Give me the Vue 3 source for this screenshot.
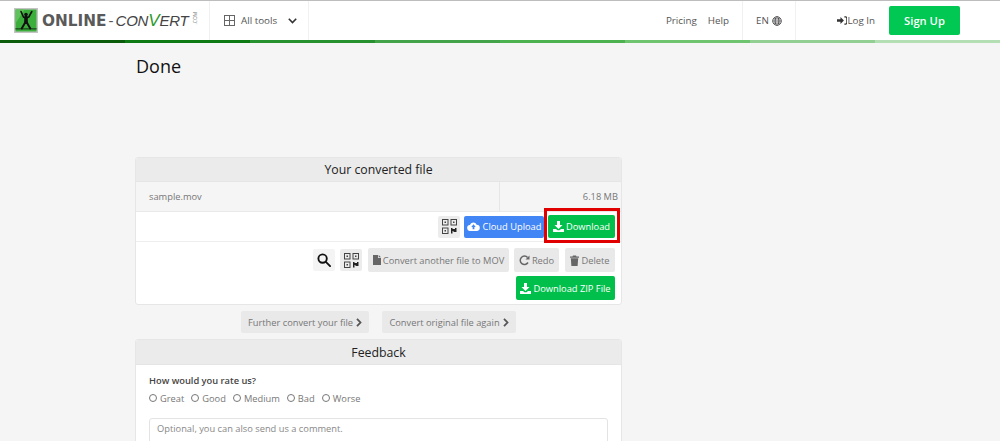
<script setup>
const segments = ['#0a5c0a','#0e7a14','#27902f','#43a349','#4cb14f','#6fc470','#92cf93','#b4deb4']
const rates = ['Great','Good','Medium','Bad','Worse']
</script>

<template>
  <div class="page">
    <header class="top">
      <div class="brand">
        <svg class="mark" width="24" height="25" viewBox="0 0 24 25">
          <rect width="24" height="25" fill="#c4c4c4"/>
          <rect x="1.500" y="1.500" width="21" height="22" fill="#3cae3c"/>
          <path d="M1.500 1.500h9l-9 14z" fill="#5fc25a"/>
          <rect x="1.500" y="20" width="21" height="1.600" fill="#1f5f1f"/>
          <g fill="none" stroke="#111" stroke-linecap="round">
            <path d="M7 3.500l2.500 5.500 2.500.8 2.800-.8 3-5.500" stroke-width="1.600"/>
            <path d="M12 9.500v4.500" stroke-width="3.600"/>
            <path d="M11.500 14l-3.800 6.500M12.500 14l3.800 6.500" stroke-width="2"/>
          </g>
          <circle cx="12" cy="6.500" r="1.800" fill="#111"/>
        </svg>
        <span class="online">ONLINE</span><span class="dash">-</span><span class="convert">CON<em>V</em>ERT</span><span class="com">.COM</span>
      </div>
      <button class="tools">
        <svg width="11" height="11" viewBox="0 0 11 11" fill="none" stroke="#666"><rect x=".5" y=".5" width="10" height="10"/><path d="M5.500 .5v10M.5 5.500h10"/></svg>
        <span>All tools</span>
        <svg width="9" height="6" viewBox="0 0 9 6" fill="none" stroke="#333" stroke-width="1.600"><path d="M.8 .8l3.700 3.700L8.200 .8"/></svg>
      </button>
      <nav class="links"><span>Pricing</span><span>Help</span></nav>
      <div class="lang">
        <span>EN</span>
        <svg width="10" height="10" viewBox="0 0 12 12" fill="none" stroke="#444"><circle cx="6" cy="6" r="5.200"/><ellipse cx="6" cy="6" rx="2.300" ry="5.200"/><path d="M1 6h10M1.700 3.500h8.600M1.700 8.500h8.600"/></svg>
      </div>
      <div class="login">
        <svg width="11" height="9" viewBox="0 0 12 10" fill="#333"><path d="M0 3.500h4V1L8 5 4 9V6.500H0z"/><path d="M8.500 .8h1.500A1.500 1.500 0 0 1 11.300 2.300v5.400A1.500 1.500 0 0 1 10 9.200H8.500" fill="none" stroke="#333" stroke-width="1.200"/></svg>
        <span>Log In</span>
      </div>
      <button class="signup">Sign Up</button>
    </header>
    <div class="progress"><i v-for="(c, i) in segments" :key="i" :style="{ background: c }"></i></div>

    <main class="main">
      <h1>Done</h1>

      <section class="card result">
        <h2>Your converted file</h2>
        <div class="file"><span class="name">sample.mov</span><span class="size">6.18 MB</span></div>
        <div class="row actions">
          <button class="btn icon">
            <svg width="15" height="15" viewBox="0 0 15 15"><g fill="none" stroke="#444"><rect x=".5" y=".5" width="5.500" height="5.500"/><rect x="9" y=".5" width="5.500" height="5.500"/><rect x=".5" y="9" width="5.500" height="5.500"/></g><path d="M2.500 2.500h1.500v1.500H2.500zM11 2.500h1.500v1.500H11zM2.500 11h1.500v1.500H2.500z" fill="#444"/><path d="M9 9h1.500v1h2.500V9h1.500v4h-3v-1h-1v2.500H9z" fill="#222"/></svg>
          </button>
          <button class="btn blue">
            <svg width="13" height="9" viewBox="0 0 14 10"><path d="M3.500 10A3.300 3.300 0 0 1 3 3.400 4 4 0 0 1 10.500 3 3.500 3.500 0 0 1 10.500 10z" fill="#fff"/><path d="M7 2.500L4.500 5.500H6V8h2V5.500h1.500z" fill="#4285f4"/></svg>
            Cloud Upload
          </button>
          <div class="mark-box">
            <button class="btn green">
              <svg width="11" height="11" viewBox="0 0 11 11" fill="#fff"><path d="M4 0h3v4h2.500L5.500 8 1.500 4H4z"/><path d="M0 8h3l1.500 1.300h2L8 8h3v3H0z"/></svg>
              Download
            </button>
          </div>
        </div>
        <div class="tools-row">
          <div class="line">
            <button class="btn icon light">
              <svg width="14" height="14" viewBox="0 0 15 15" fill="none" stroke="#111" stroke-width="2"><circle cx="6" cy="6" r="4.500"/><path d="M9.500 9.500l4.500 4.500" stroke-linecap="round"/></svg>
            </button>
            <button class="btn icon qr-btn">
              <svg width="15" height="15" viewBox="0 0 15 15"><g fill="none" stroke="#444"><rect x=".5" y=".5" width="5.500" height="5.500"/><rect x="9" y=".5" width="5.500" height="5.500"/><rect x=".5" y="9" width="5.500" height="5.500"/></g><path d="M2.500 2.500h1.500v1.500H2.500zM11 2.500h1.500v1.500H11zM2.500 11h1.500v1.500H2.500z" fill="#444"/><path d="M9 9h1.500v1h2.500V9h1.500v4h-3v-1h-1v2.500H9z" fill="#222"/></svg>
            </button>
            <button class="btn gray wide">
              <svg width="8" height="10" viewBox="0 0 8 10" fill="#666"><path d="M0 0h5v3h3v7H0zM5.700 0L8 2.300H5.700z"/></svg>
              Convert another file to MOV
            </button>
            <button class="btn gray redo">
              <svg width="11" height="11" viewBox="0 0 11 11" fill="none" stroke="#666" stroke-width="1.500"><path d="M9 7.500A4.200 4.200 0 1 1 8.600 2.500"/><path d="M10.500 .5v4h-4z" fill="#666" stroke="none"/></svg>
              Redo
            </button>
            <button class="btn gray del">
              <svg width="9" height="11" viewBox="0 0 9 11" fill="#666"><path d="M0 1.500h2.500L3 .5h3l.5 1H9v1.200H0zM.8 3.300h7.400L7.600 11H1.400z"/></svg>
              Delete
            </button>
          </div>
          <div class="line">
            <button class="btn green zip">
              <svg width="11" height="11" viewBox="0 0 11 11" fill="#fff"><path d="M4 0h3v4h2.500L5.500 8 1.500 4H4z"/><path d="M0 8h3l1.500 1.300h2L8 8h3v3H0z"/></svg>
              Download ZIP File
            </button>
          </div>
        </div>
      </section>

      <div class="more">
        <button class="btn gray next">Further convert your file <svg width="6" height="9" viewBox="0 0 6 9" fill="none" stroke="#555" stroke-width="1.800"><path d="M1 .8l3.500 3.700L1 8.200"/></svg></button>
        <button class="btn gray next">Convert original file again <svg width="6" height="9" viewBox="0 0 6 9" fill="none" stroke="#555" stroke-width="1.800"><path d="M1 .8l3.500 3.700L1 8.200"/></svg></button>
      </div>

      <section class="card feedback">
        <h2>Feedback</h2>
        <div class="body">
          <p class="ask">How would you rate us?</p>
          <div class="rates">
            <label v-for="r in rates" :key="r"><i class="radio"></i>{{ r }}</label>
          </div>
          <div class="comment">Optional, you can also send us a comment.</div>
        </div>
      </section>
    </main>
  </div>
</template>

<style>
html, body { margin: 0; overflow: hidden; height: 441px; background: #f5f5f5; }
</style>

<style scoped>
* { box-sizing: border-box; }
.page { height: 441px; overflow: hidden; background: #f5f5f5; font-family: "Open Sans", "Liberation Sans", sans-serif; color: #555; font-size: 9.300px; }
button { font: inherit; border: 0; cursor: pointer; }
.top { height: 40px; background: #fff; border-top: 1px solid #bdbdbd; display: flex; align-items: center; }
.brand { width: 209px; height: 100%; padding-left: 14px; display: flex; align-items: center; white-space: nowrap; flex: none; }
.mark { margin-right: 4px; flex: none; }
.online { font-family: "DejaVu Sans", sans-serif; font-weight: 700; font-size: 15.300px; color: #5a5a5a; }
.dash { font-family: "Liberation Sans", sans-serif; font-size: 15px; color: #555; margin: 0 2px; }
.convert { font-family: "Liberation Sans", sans-serif; font-style: italic; font-size: 15px; color: #444; letter-spacing: -.2px; }
.convert em { color: #2b9a2b; font-size: 17px; }
.com { font-size: 5px; transform: rotate(-90deg); width: 7px; display: block; color: #777; text-align: center; margin-left: 2px; }
.tools { width: 100px; height: 100%; background: #fff; border-left: 1px solid #f1f1f1; border-right: 1px solid #f1f1f1; display: flex; align-items: center; padding: 0 0 0 14px; color: #555; font-size: 9.800px; flex: none; }
.tools span { margin: 0 11px 0 6px; }
.links { margin-left: auto; display: flex; gap: 11px; height: 100%; align-items: center; padding-right: 13px; font-size: 9.800px; }
.lang { width: 54px; height: 100%; border-left: 1px solid #f1f1f1; border-right: 1px solid #f1f1f1; display: flex; align-items: center; justify-content: center; gap: 3px; font-size: 9.800px; }
.login { display: flex; align-items: center; justify-content: space-between; width: 38px; margin-left: 41px; font-size: 9.800px; white-space: nowrap; }
.signup { width: 71px; height: 29px; margin: 0 40px 0 14px; background: #00c853; color: #fff; border-radius: 2px; font-size: 11.200px; font-weight: 600; padding: 0; }
.progress { height: 3px; display: flex; }
.progress i { flex: 1; }
.main { width: 487px; margin-left: 135px; }
h1 { margin: 0; height: 114px; padding: 11px 0 0 1px; font-size: 18px; line-height: 24px; font-weight: 400; color: #111; }
.card { border: 1px solid #e6e6e6; border-radius: 3px; background: #fff; overflow: hidden; }
h2 { margin: 0; height: 24px; line-height: 23px; background: #ebebeb; text-align: center; font-size: 12.300px; font-weight: 400; color: #222; border-bottom: 1px solid #e5e5e5; }
.feedback h2 { height: 25px; line-height: 25px; }
.file { height: 30px; background: #f5f5f5; display: flex; align-items: center; justify-content: space-between; border-bottom: 1px solid #e9e9e9; color: #777; font-size: 9.300px; }
.name { padding-left: 13px; }
.size { width: 122px; height: 100%; line-height: 30px; text-align: right; border-left: 1px solid #e6e6e6; padding-right: 3px; }
.row { border-bottom: 1px solid #eee; }
.actions { height: 30px; display: flex; align-items: center; justify-content: flex-end; gap: 4px; padding-right: 6px; }
.btn { display: inline-flex; align-items: center; justify-content: center; border-radius: 2px; font-size: 9.300px; white-space: nowrap; padding: 0; }
.icon { width: 22px; height: 22px; background: #ececec; }
.light { background: #f4f4f4; }
.blue { width: 80px; height: 22px; background: #4285f4; color: #fff; gap: 3px; }
.green { background: #00c04b; color: #fff; gap: 2px; }
.mark-box { position: relative; display: flex; }
.mark-box::after { content: ""; position: absolute; inset: -7px -5px -5px -4px; border: 3px solid #e00000; pointer-events: none; }
.mark-box .green { width: 67px; height: 23px; }
.tools-row { height: 62px; padding: 6px 6px 0 0; }
.line { display: flex; justify-content: flex-end; align-items: center; gap: 5px; }
.line + .line { margin-top: 4px; }
.qr-btn { margin-right: 1px; }
.del { margin-left: 1px; }
.gray { background: #e9e9e9; color: #777; gap: 2px; height: 24px; }
.wide { width: 141px; }
.redo { width: 45px; }
.del { width: 50px; }
.zip { width: 99px; height: 24px; }
.more { display: flex; justify-content: center; gap: 13px; margin: 6px 0; }
.next { height: 22px; gap: 3px; }
.next:first-child { width: 128px; }
.next:last-child { width: 134px; }
.body { padding: 9px 13px; }
.ask { margin: 0; font-size: 9.300px; font-weight: 600; color: #444; line-height: 14px; }
.rates { display: flex; gap: 7px; margin-top: 1px; height: 18px; align-items: center; color: #777; font-size: 9.300px; }
.rates label { display: flex; align-items: center; gap: 3px; }
.radio { width: 8px; height: 8px; border: 1px solid #777; border-radius: 50%; background: #fff; }
.comment { margin-top: 11px; height: 60px; border: 1px solid #e3e3e3; border-radius: 3px; padding: 3px 7px; color: #888; font-size: 9.300px; }
</style>
